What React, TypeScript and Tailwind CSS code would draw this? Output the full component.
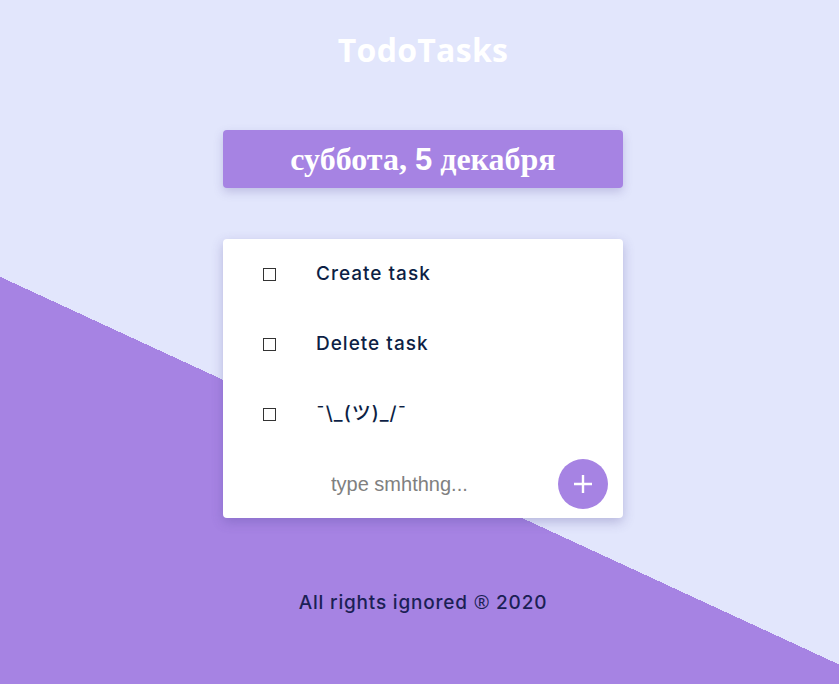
const tasks = ["Create task", "Delete task", "¯\\_(ツ)_/¯"];

const TaskRow = ({ text }: { text: string }) => {
  return (
    <div className="flex flex-row items-center h-[70px]">
      <div className="ml-[40px] w-[13px] h-[13px] border border-[#333333] bg-white" />
      <div className="ml-[40px] text-[19px] font-medium text-[#0d1f45] font-['Inter','Noto_Sans_CJK_JP',sans-serif] tracking-[1px]">
        {text}
      </div>
    </div>
  );
};

const App = () => {
  return (
    <div className="min-h-screen w-full pl-[7px] flex flex-col items-center bg-[linear-gradient(204.8deg,#e2e6fc_62%,#a683e3_62%)]">
      <div className="mt-[26px] text-[32px] font-bold text-white font-['Open_Sans',sans-serif] tracking-[0.3px]">
        TodoTasks
      </div>
      <div className="mt-[56px] w-[400px] h-[58px] flex items-center justify-center bg-[#a683e3] rounded-[4px] shadow-[0_4px_10px_rgba(90,80,160,0.25)]">
        <span className="text-[32px] font-bold text-white font-['Liberation_Serif',serif]">
          суббота, <span className="font-['Liberation_Sans',sans-serif] text-[31px]">5</span> декабря
        </span>
      </div>
      <div className="mt-[51px] w-[400px] bg-white rounded-[4px] shadow-[0_4px_12px_rgba(80,70,150,0.3)] flex flex-col">
        {tasks.map((t) => (
          <TaskRow key={t} text={t} />
        ))}
        <div className="flex flex-row items-center h-[69px]">
          <input
            className="ml-[108px] w-[210px] text-[20px] text-[#555] placeholder:text-[#808080] outline-none font-['Liberation_Sans',sans-serif]"
            placeholder="type smhthng..."
          />
          <button className="ml-auto mr-[15px] w-[50px] h-[50px] rounded-full bg-[#a683e3] flex items-center justify-center">
            <svg width="20" height="20" viewBox="0 0 20 20">
              <path d="M10 1v18M1 10h18" stroke="white" strokeWidth="2.4" />
            </svg>
          </button>
        </div>
      </div>
      <div className="mt-[70px] text-[19px] font-medium text-[#1b1f55] font-['Inter',sans-serif] tracking-[0.8px]">
        All rights ignored <span className="font-['Open_Sans',sans-serif] font-normal">®</span> 2020
      </div>
    </div>
  );
};

export default App;
